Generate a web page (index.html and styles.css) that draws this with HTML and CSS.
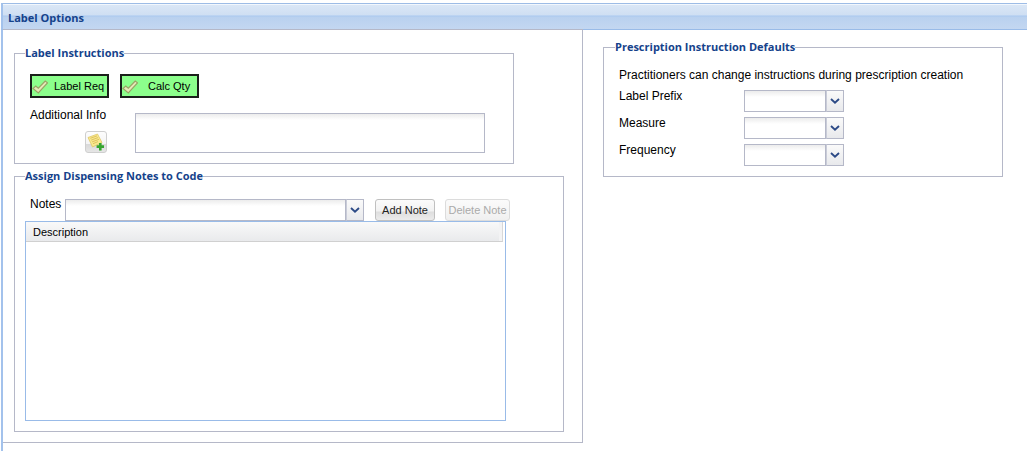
FILE: index.html
```html
<!DOCTYPE html>
<html lang="en">
<head>
<meta charset="utf-8">
<title>Label Options</title>
<link rel="stylesheet" href="styles.css">
</head>
<body>
<div class="window">
  <div class="titlebar"><span class="title">Label Options</span></div>
  <div class="columns">
    <div class="panel">
      <fieldset class="group group-label">
        <legend>Label Instructions</legend>
        <div class="toggles">
          <button class="toggle toggle-a" type="button">
            <svg class="check" viewBox="0 0 16 14" aria-hidden="true"><path d="M1 8.5 L3.8 6 L6.3 8.2 L13.2 1 L15.5 2.8 L6.3 13 Z" fill="#e6e8b8" stroke="#98a565" stroke-width="1.2"/></svg>
            <span>Label Req</span>
          </button>
          <button class="toggle toggle-b" type="button">
            <svg class="check" viewBox="0 0 16 14" aria-hidden="true"><path d="M1 8.5 L3.8 6 L6.3 8.2 L13.2 1 L15.5 2.8 L6.3 13 Z" fill="#e6e8b8" stroke="#98a565" stroke-width="1.2"/></svg>
            <span>Calc Qty</span>
          </button>
        </div>
        <div class="info">
          <div class="info-side">
            <span class="text">Additional Info</span>
            <button class="iconbtn" type="button" aria-label="Add">
              <svg viewBox="0 0 18 18" width="18" height="18" aria-hidden="true">
                <path d="M1 4.5 L10.5 1 L15 9.5 L5.5 14 Z" fill="#f8e88e" stroke="#dcc35a" stroke-width=".7"/>
                <path d="M3.3 5.3 L10 2.9 M4.2 7.1 L11 4.6 M5.1 8.9 L12 6.3 M6 10.7 L11 8.6" stroke="#d2b24a" stroke-width=".7" fill="none"/>
                <path d="M12 10 h2.6 v2.3 h2.4 v2.7 h-2.4 v2.4 h-2.6 v-2.4 h-2.4 v-2.7 h2.4 Z" fill="#36a52e"/>
              </svg>
            </button>
          </div>
          <div class="field info-area"></div>
        </div>
      </fieldset>
      <fieldset class="group group-notes">
        <legend>Assign Dispensing Notes to Code</legend>
        <div class="notes-row">
          <span class="text notes-label">Notes</span>
          <div class="combo combo-notes">
            <div class="field"></div>
            <div class="trigger"><svg viewBox="0 0 10 6" width="10" height="6" aria-hidden="true"><path d="M1 1 L5 4.6 L9 1" fill="none" stroke="#2c4a86" stroke-width="1.9"/></svg></div>
          </div>
          <button class="btn" type="button">Add Note</button>
          <button class="btn btn-off" type="button">Delete Note</button>
        </div>
        <div class="grid">
          <div class="grid-head"><span class="grid-cell">Description</span></div>
        </div>
      </fieldset>
    </div>
    <div class="side">
      <fieldset class="group group-defaults">
        <legend>Prescription Instruction Defaults</legend>
        <p class="text intro">Practitioners can change instructions during prescription creation</p>
        <div class="form">
          <span class="text">Label Prefix</span>
          <div class="combo combo-small">
            <div class="field"></div>
            <div class="trigger"><svg viewBox="0 0 10 6" width="10" height="6" aria-hidden="true"><path d="M1 1 L5 4.6 L9 1" fill="none" stroke="#2c4a86" stroke-width="1.9"/></svg></div>
          </div>
          <span class="text">Measure</span>
          <div class="combo combo-small">
            <div class="field"></div>
            <div class="trigger"><svg viewBox="0 0 10 6" width="10" height="6" aria-hidden="true"><path d="M1 1 L5 4.6 L9 1" fill="none" stroke="#2c4a86" stroke-width="1.9"/></svg></div>
          </div>
          <span class="text">Frequency</span>
          <div class="combo combo-small">
            <div class="field"></div>
            <div class="trigger"><svg viewBox="0 0 10 6" width="10" height="6" aria-hidden="true"><path d="M1 1 L5 4.6 L9 1" fill="none" stroke="#2c4a86" stroke-width="1.9"/></svg></div>
          </div>
        </div>
      </fieldset>
    </div>
  </div>
</div>
</body>
</html>
```
FILE: styles.css
```css
* { box-sizing: border-box; }
html, body { margin: 0; padding: 0; background: #fff; }
body { width: 1027px; height: 451px; overflow: hidden; font-family: "Liberation Sans", Arial, sans-serif; font-size: 12px; color: #000; }
.window { padding-top: 3px; }
.titlebar {
  height: 27px;
  padding: 7px 0 0 5px;
  border-top: 1px solid #9dbce6;
  border-bottom: 1px solid #99bbe8;
  border-left: 2px solid #a3c2ec;
  margin-left: 1px;
  background: linear-gradient(#dbe7f6 0, #cfdff3 11px, #a9c8f0 12px, #b9d1ef 13px, #c3d7f1 100%);
  box-shadow: inset 0 1px 0 #f2f7fd;
}
.title { font-family: "Open Sans", sans-serif; font-weight: 700; font-size: 11px; line-height: 13px; color: #15428b; display: block; }
.columns { display: flex; align-items: flex-start; margin-left: 1px; border-left: 2px solid #a3c2ec; height: 421px; }
.panel { width: 580px; height: 414px; margin-top: -1px; border-top: 1px solid #b5b8c8; border-right: 1px solid #b5b8c8; border-bottom: 1px solid #b5b8c8; padding: 16px 0 0 11px; }
.side { padding: 10px 0 0 20px; }
.group { margin: 0; padding: 0; border: 1px solid #b5b8c8; min-width: 0; }
.group legend { padding: 0; font-family: "Open Sans", sans-serif; font-weight: 700; font-size: 11px; line-height: 14px; color: #15428b; }
.group-label { width: 500px; height: 118px; padding: 14px 0 0 15px; }
.group-label legend { margin-left: -5px; }
.group-notes { width: 550px; height: 263px; margin-top: 5px; padding: 16px 0 0 10px; }
.group-notes legend { margin-left: 0; }
.group-defaults { width: 400px; height: 137px; padding: 0 0 0 15px; }
.group-defaults legend { margin-left: -4px; }
.text { font-size: 12px; line-height: 14px; color: #000; }
.toggles { display: flex; gap: 11px; }
.toggle { display: flex; align-items: center; width: 79px; height: 24px; padding: 1px 0 0 0; border: 2px solid #1a1f1a; background: #8cff8c; font: 11px/13px "Liberation Sans", Arial, sans-serif; color: #000; }
.check { width: 16px; height: 14px; flex: none; }
.toggle-a span { margin-left: 6px; }
.toggle-b span { margin-left: 10px; }
.info { display: flex; gap: 29px; margin-top: 10px; }
.info-side { width: 76px; display: flex; flex-direction: column; align-items: flex-end; }
.info-side .text { align-self: flex-start; white-space: nowrap; }
.iconbtn { width: 22px; height: 22px; margin: 9px -1px 0 0; padding: 0; display: flex; align-items: center; justify-content: center; border: 1px solid #cfcfcf; border-radius: 3px; background: linear-gradient(#fdfdfd 0, #f4f4f4 60%, #d9d9d9 62%, #e6e6e6 100%); }
.field { height: 100%; border: 1px solid #b5b8c8; background: linear-gradient(#ececec 0, #fff 6px); }
.info-area { width: 350px; height: 40px; margin-top: 5px; }
.notes-row { display: flex; align-items: flex-start; margin-left: 5px; height: 22px; }
.notes-label { width: 35px; margin-top: -2px; }
.combo { display: flex; height: 22px; }
.combo .field { flex: 1; }
.trigger { width: 18px; height: 22px; display: flex; align-items: center; justify-content: center; border: 1px solid #b5b8c8; border-left: 1px solid #c9ccd8; background: linear-gradient(#fafafa, #e8e9ec); }
.combo-notes { width: 299px; }
.combo-small { width: 100px; }
.btn { height: 22px; padding: 0; border: 1px solid #c0c0c0; border-radius: 3px; background: linear-gradient(#fbfbfb 0, #f2f2f2 55%, #dedede 60%, #ececec 100%); font: 11px/13px "Liberation Sans", Arial, sans-serif; color: #222; }
.notes-row .btn { width: 60px; margin-left: 11px; }
.notes-row .btn-off { width: 65px; margin-left: 10px; color: #aaa; border-color: #dcdcdc; background: linear-gradient(#fbfbfb, #f0f0f0); }
.grid { width: 481px; height: 200px; border: 1px solid #99bbe8; }
.grid-head { height: 20px; width: 477px; border-bottom: 1px solid #d0d0d0; border-right: 1px solid #d8d8d8; padding: 4px 0 0 7px; background: linear-gradient(#f9f9f9, #e9eaec); font-size: 11px; line-height: 13px; color: #000; box-shadow: inset -3px 0 0 #f3f3f4; }
.intro { margin: 14px 0 0; white-space: nowrap; }
.form { display: grid; grid-template-columns: 125px 100px; grid-auto-rows: 22px; row-gap: 5px; margin-top: 8px; }
.form .text { margin-top: -1px; }
```
